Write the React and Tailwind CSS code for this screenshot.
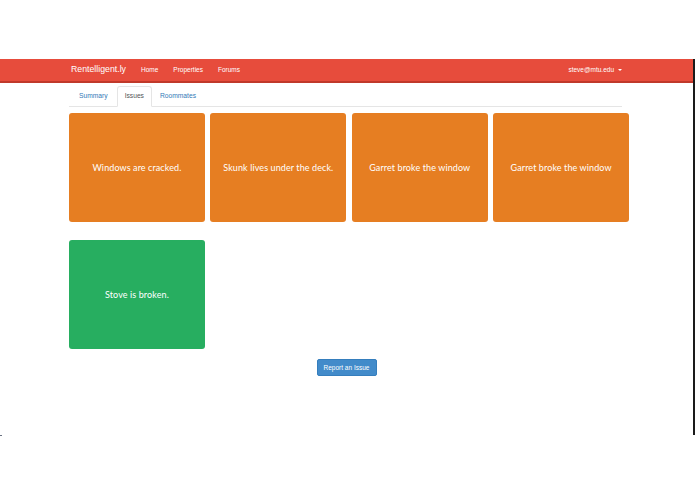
const issues = [
  { text: "Windows are cracked.", color: "bg-[#e67e22]" },
  { text: "Skunk lives under the deck.", color: "bg-[#e67e22]" },
  { text: "Garret broke the window", color: "bg-[#e67e22]" },
  { text: "Garret broke the window", color: "bg-[#e67e22]" },
  { text: "Stove is broken.", color: "bg-[#27ae60]" },
];

const IssueCard = ({ issue }) => (
  <div
    className={`h-[109px] rounded-[3px] flex items-center justify-center whitespace-nowrap text-white text-[9px] tracking-[0.1px] font-['Lato',sans-serif] ${issue.color}`}
  >
    {issue.text}
  </div>
);

const App = () => {
  return (
    <div className="h-[494px] w-[695px] overflow-hidden bg-white pt-[59px] font-['Liberation_Sans',sans-serif]">
      <div className="flex h-[376px]">
        <div className="flex-1">
          {/* Navbar */}
          <nav className="h-[22px] box-content bg-[#e74c3c] border-b-2 border-[#c0392b] flex items-center pl-[71px] pr-[71px] text-white">
            <span className="text-[8.75px] mr-[15px]">Rentelligent.ly</span>
            <div className="flex gap-[15px] text-[6.5px]">
              <span>Home</span>
              <span>Properties</span>
              <span>Forums</span>
            </div>
            <span className="ml-auto text-[6.5px] flex items-center gap-1">
              steve@mtu.edu
              <span className="border-x-[2px] border-t-[2px] border-x-transparent border-t-white" />
            </span>
          </nav>

          <div className="pl-[69px] pr-[64px]">
            {/* Tabs */}
            <div className="mt-[3px] mr-[7px] h-[21px] flex border-b border-[#e5e5e5] pl-0.5 text-[6.7px] text-[#337ab7]">
              <span className="px-2 flex items-center">Summary</span>
              <span className="ml-px px-[7px] flex items-center bg-white text-[#555] border border-[#e5e5e5] border-b-white rounded-t-[3px] h-[21px]">
                Issues
              </span>
              <span className="px-2 flex items-center">Roommates</span>
            </div>

            {/* Issue cards */}
            <div className="mt-[6px] grid grid-cols-4 gap-x-[5.5px] gap-y-[18px]">
              {issues.map((issue, i) => (
                <IssueCard key={i} issue={issue} />
              ))}
            </div>

            <div className="mt-[10px] pr-[5px] flex justify-center">
              <button className="h-[17px] w-[60px] rounded-[2px] bg-[#428bca] border border-[#357ebd] text-white text-[6.5px]">
                Report an Issue
              </button>
            </div>
          </div>
        </div>
        {/* dark edge of the captured window */}
        <div className="w-[2px] bg-[#1a1a1a]" />
      </div>
      <div className="h-px w-[2px] bg-gray-500" />
    </div>
  );
};

export default App;
